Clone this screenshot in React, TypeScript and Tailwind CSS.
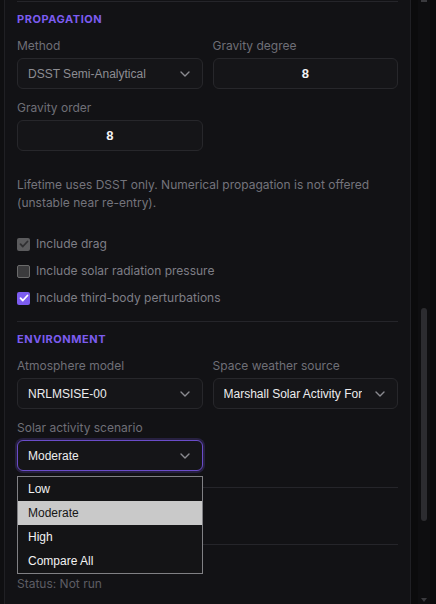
const sans = "font-['Inter','Noto_Sans',sans-serif]";
const ctl = "font-['Liberation_Sans','Arial',sans-serif]";

function Chevron() {
  return (
    <svg width="10" height="6" viewBox="0 0 10 6" fill="none" className="shrink-0">
      <path d="M1 1l4 4 4-4" stroke="#8a8a90" strokeWidth="1.4" strokeLinecap="round" strokeLinejoin="round" />
    </svg>
  );
}

function Label({ children }: { children: React.ReactNode }) {
  return <div className={`${sans} text-[12px] leading-4 text-[#6f6f77] mb-1`}>{children}</div>;
}

function SelectBox({ value, disabled, focused }: { value: string; disabled?: boolean; focused?: boolean }) {
  return (
    <div
      className={`h-[31px] rounded-md border flex items-center pl-[10px] pr-[12px] gap-[13px] bg-[#151518] ${
        focused ? 'border-[#6a4cc9] ring-2 ring-[#7c5cf0]/20' : 'border-[#27272b]'
      }`}
    >
      <span
        className={`${ctl} flex-1 min-w-0 overflow-hidden whitespace-nowrap text-[12px] ${
          disabled ? 'text-[#8d8d93]' : 'text-[#ececee]'
        }`}
      >
        {value}
      </span>
      <Chevron />
    </div>
  );
}

function NumberBox({ value }: { value: string }) {
  return (
    <div className="h-[31px] rounded-md border border-[#27272b] bg-[#151518] flex items-center justify-center">
      <span className={`${ctl} text-[13px] font-bold text-[#f2f2f4]`}>{value}</span>
    </div>
  );
}

function Check({ state }: { state: 'disabled' | 'off' | 'on' }) {
  if (state === 'off') {
    return <span className="w-[13px] h-[13px] rounded-[2px] border border-[#6b6b6b] bg-[#3b3b3d] shrink-0" />;
  }
  const on = state === 'on';
  return (
    <span
      className={`w-[13px] h-[13px] rounded-[2px] flex items-center justify-center shrink-0 ${
        on ? 'bg-[#7c5cf0]' : 'bg-[#5b5b5d]'
      }`}
    >
      <svg width="10" height="10" viewBox="0 0 10 10" fill="none">
        <path
          d="M1.5 5.2l2.3 2.3 4.7-5"
          stroke={on ? '#ffffff' : '#2f2f31'}
          strokeWidth="1.8"
          strokeLinecap="round"
          strokeLinejoin="round"
        />
      </svg>
    </span>
  );
}

function Heading({ children }: { children: React.ReactNode }) {
  return (
    <div className={`${sans} text-[11px] leading-[14px] font-bold tracking-wider uppercase text-[#7c5cf0]`}>
      {children}
    </div>
  );
}

const Divider = () => <div className="h-px bg-[#25252a]" />;

export default function App() {
  const checks: { label: string; state: 'disabled' | 'off' | 'on' }[] = [
    { label: 'Include drag', state: 'disabled' },
    { label: 'Include solar radiation pressure', state: 'off' },
    { label: 'Include third-body perturbations', state: 'on' },
  ];
  const options = ['Low', 'Moderate', 'High', 'Compare All'];

  return (
    <div className="w-[436px] h-[604px] flex bg-[#0e0e10] overflow-hidden">
      <div className="w-[4px] shrink-0 bg-[#0f0f11]" />
      <div className="w-[407px] shrink-0 border-l border-r border-[#202024] bg-[#121215] px-3">
        <div className="mt-px">
          <Divider />
        </div>

        {/* Propagation */}
        <div className="mt-[10px]">
          <Heading>Propagation</Heading>
        </div>
        <div className="grid grid-cols-2 gap-x-[10px] gap-y-[11px] mt-3">
          <div>
            <Label>Method</Label>
            <SelectBox value="DSST Semi-Analytical" disabled />
          </div>
          <div>
            <Label>Gravity degree</Label>
            <NumberBox value="8" />
          </div>
          <div>
            <Label>Gravity order</Label>
            <NumberBox value="8" />
          </div>
        </div>

        <p className={`${sans} mt-[25px] text-[12px] leading-[18px] text-[#74747c]`}>
          Lifetime uses DSST only. Numerical propagation is not offered (unstable near re-entry).
        </p>

        <div className="mt-[23px] flex flex-col gap-[9px]">
          {checks.map((c) => (
            <label key={c.label} className="h-[18px] flex items-center gap-[6px]">
              <Check state={c.state} />
              <span className={`${sans} text-[12px] text-[#7e7e86]`}>{c.label}</span>
            </label>
          ))}
        </div>

        <div className="mt-[14px]">
          <Divider />
        </div>

        {/* Environment */}
        <div className="mt-[10px]">
          <Heading>Environment</Heading>
        </div>
        <div className="grid grid-cols-2 gap-x-[10px] gap-y-[11px] mt-3">
          <div>
            <Label>Atmosphere model</Label>
            <SelectBox value="NRLMSISE-00" />
          </div>
          <div>
            <Label>Space weather source</Label>
            <SelectBox value="Marshall Solar Activity Forecast" />
          </div>
          <div className="relative">
            <Label>Solar activity scenario</Label>
            <SelectBox value="Moderate" focused />
            <ul className="absolute left-0 right-0 top-[calc(100%+5px)] z-10 border border-[#808084] bg-[#141416]">
              {options.map((o) => (
                <li
                  key={o}
                  className={`${ctl} h-6 flex items-center pl-[10px] text-[12px] ${
                    o === 'Moderate' ? 'bg-[#c9c9c9] text-[#161616]' : 'text-[#f2f2f2]'
                  }`}
                >
                  {o}
                </li>
              ))}
            </ul>
          </div>
        </div>

        <div className="mt-4">
          <Divider />
        </div>
        <div className="h-[56px]" />
        <Divider />

        <p className={`${sans} mt-[30px] text-[12px] leading-[18px] text-[#5d5d64]`}>Status: Not run</p>
      </div>

      {/* scrollbar */}
      <div className="flex-1 flex justify-center bg-[#0b0b0c]">
        <div className="w-[12px] bg-[#0e0e10] flex flex-col items-center">
          <div className="w-[6px] h-[2px] bg-[#3a3a3e]" />
          <div className="mt-[306px] w-[6px] h-[213px] rounded-full bg-[#2c2c30]" />
          <div className="mt-auto mb-[2px] w-0 h-0 border-l-[3px] border-r-[3px] border-t-[4px] border-l-transparent border-r-transparent border-t-[#3a3a3e]" />
        </div>
      </div>
    </div>
  );
}
